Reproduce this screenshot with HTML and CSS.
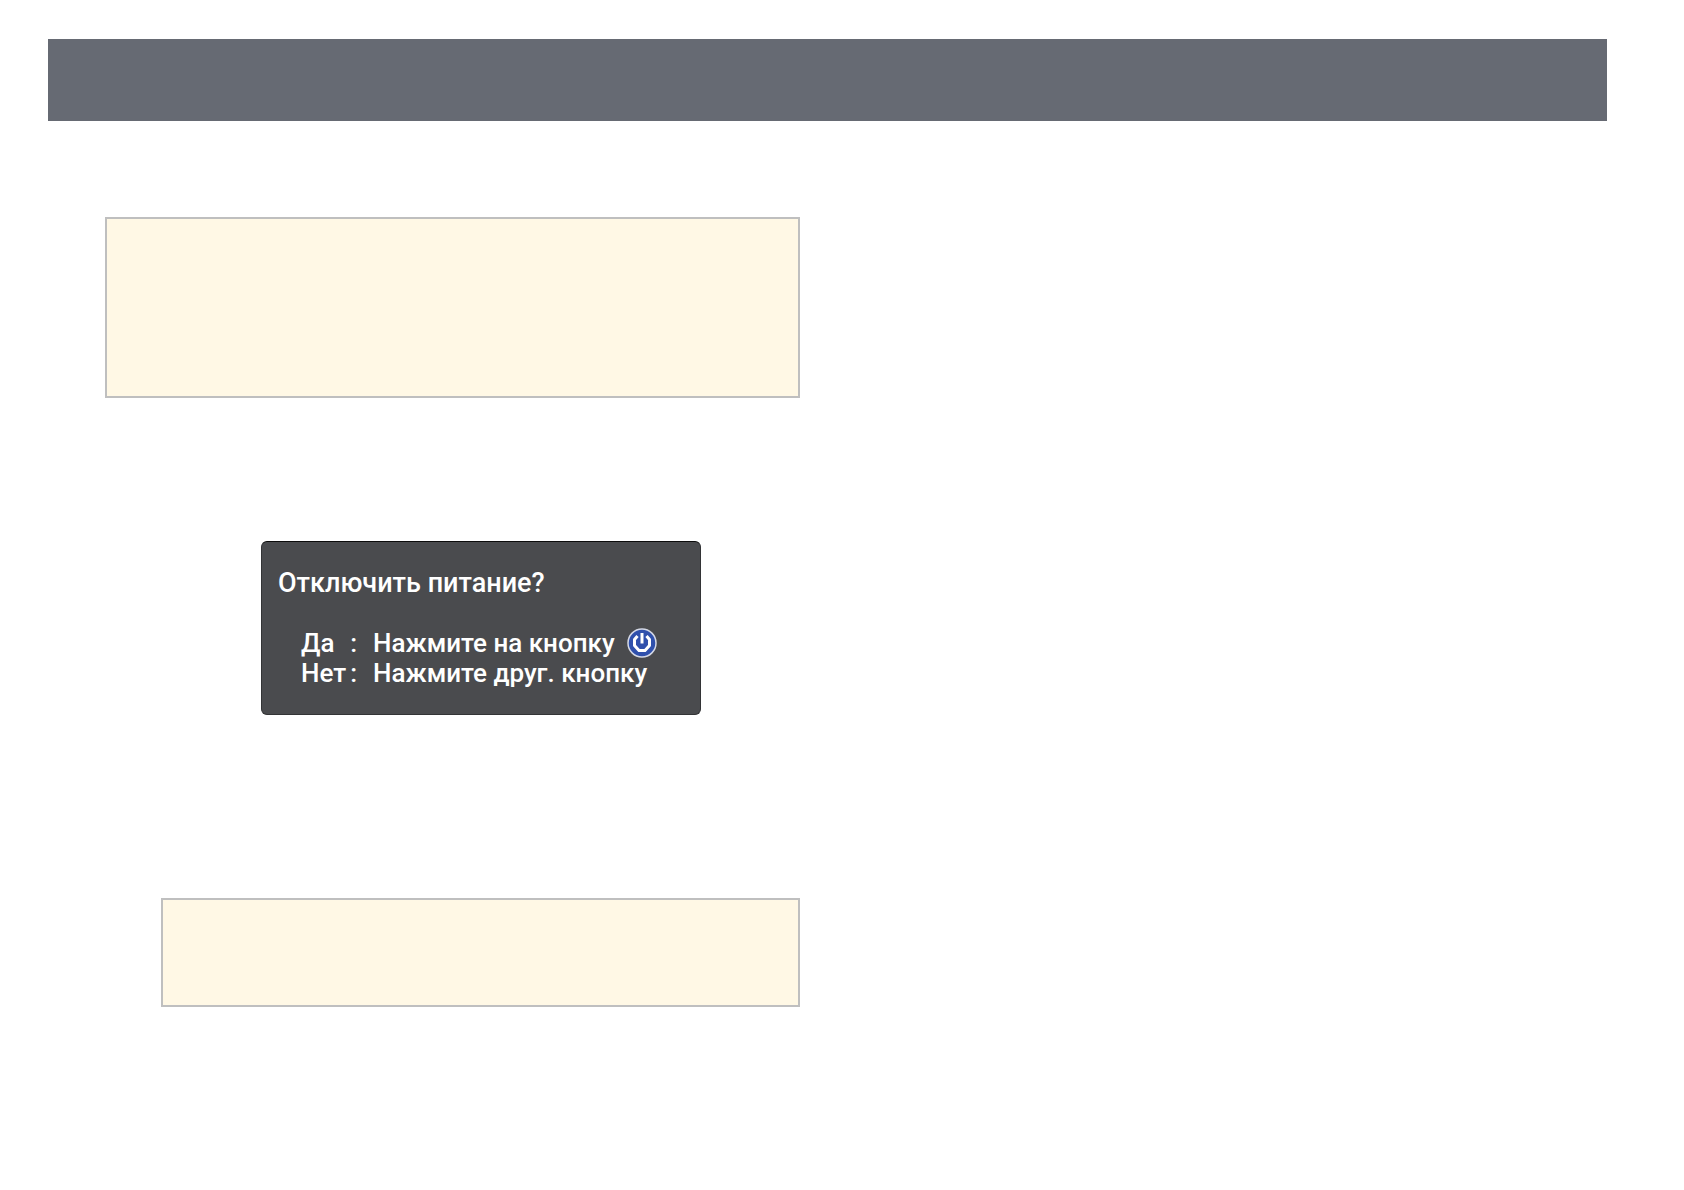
FILE: index.html
```html
<!DOCTYPE html>
<html lang="ru">
<head>
  <meta charset="UTF-8" />
  <meta name="viewport" content="width=device-width, initial-scale=1.0"/>
  <title>Отключить питание?</title>
  <link rel="stylesheet" href="styles.css">
</head>
<body>
  <header class="header"></header>

  <main class="columns">
    <div class="column">
      <div class="note"></div>

      <section class="dialog" aria-labelledby="dialog-title">
        <h1 class="dialog-title" id="dialog-title">Отключить питание?</h1>
        <dl class="answers">
          <dt><span>Да</span><span>:</span></dt>
          <dd>
            Нажмите на кнопку
            <svg class="power" viewBox="0 0 30 30" role="img" aria-label="Питание">
              <circle cx="15" cy="15" r="14" fill="#2f50ac" stroke="#d5d9e6" stroke-width="1.5"/>
              <path d="M10.5 8 L7.5 11.5 V17.5 L12 22.5 H18 L22.5 17.5 V11.5 L19.5 8" fill="none" stroke="#fff" stroke-width="3" stroke-linejoin="round"/>
              <path d="M15 5 V15.5" stroke="#fff" stroke-width="3"/>
            </svg>
          </dd>
          <dt><span>Нет</span><span>:</span></dt>
          <dd>Нажмите друг. кнопку</dd>
        </dl>
      </section>

      <div class="note note-nested"></div>
    </div>
    <div class="column"></div>
  </main>
</body>
</html>
```

FILE: styles.css
```css
:root {
  --bar: #666a73;
  --note: #fff8e5;
  --note-border: #bfbfbf;
  --dialog: #4a4b4e;
}

* {
  margin: 0;
  padding: 0;
  box-sizing: border-box;
}

body {
  font-family: Roboto, "Noto Sans", sans-serif;
  background: #fff;
  padding: 39px 77px 39px 48px;
}

.header {
  min-height: 82px;
  background: var(--bar);
}

.columns {
  display: grid;
  grid-template-columns: 1fr 1fr;
  gap: 55px;
  padding-top: 96px;
}

.note {
  min-height: 181px;
  margin-left: 57px;
  background: var(--note);
  border: 2px solid var(--note-border);
}

.note-nested {
  min-height: 109px;
  margin-left: 113px;
}

.dialog {
  width: 440px;
  max-width: 100%;
  margin: 143px auto 183px 213px;
  padding: 26px 16px;
  background: var(--dialog);
  border: 1px solid #333436;
  border-top-color: #0c0c0c;
  border-radius: 6px;
  color: #fff;
  line-height: 30px;
}

.dialog-title {
  font-size: 27px;
  font-weight: 500;
}

.answers {
  display: grid;
  grid-template-columns: 56px 1fr;
  column-gap: 16px;
  margin: 30px 0 0 23px;
  font-size: 26px;
  font-weight: 500;
}

.answers dt {
  display: flex;
  justify-content: space-between;
}

.answers dd {
  display: flex;
  align-items: center;
  gap: 12px;
  white-space: nowrap;
}

.power {
  width: 30px;
  height: 30px;
}
```
